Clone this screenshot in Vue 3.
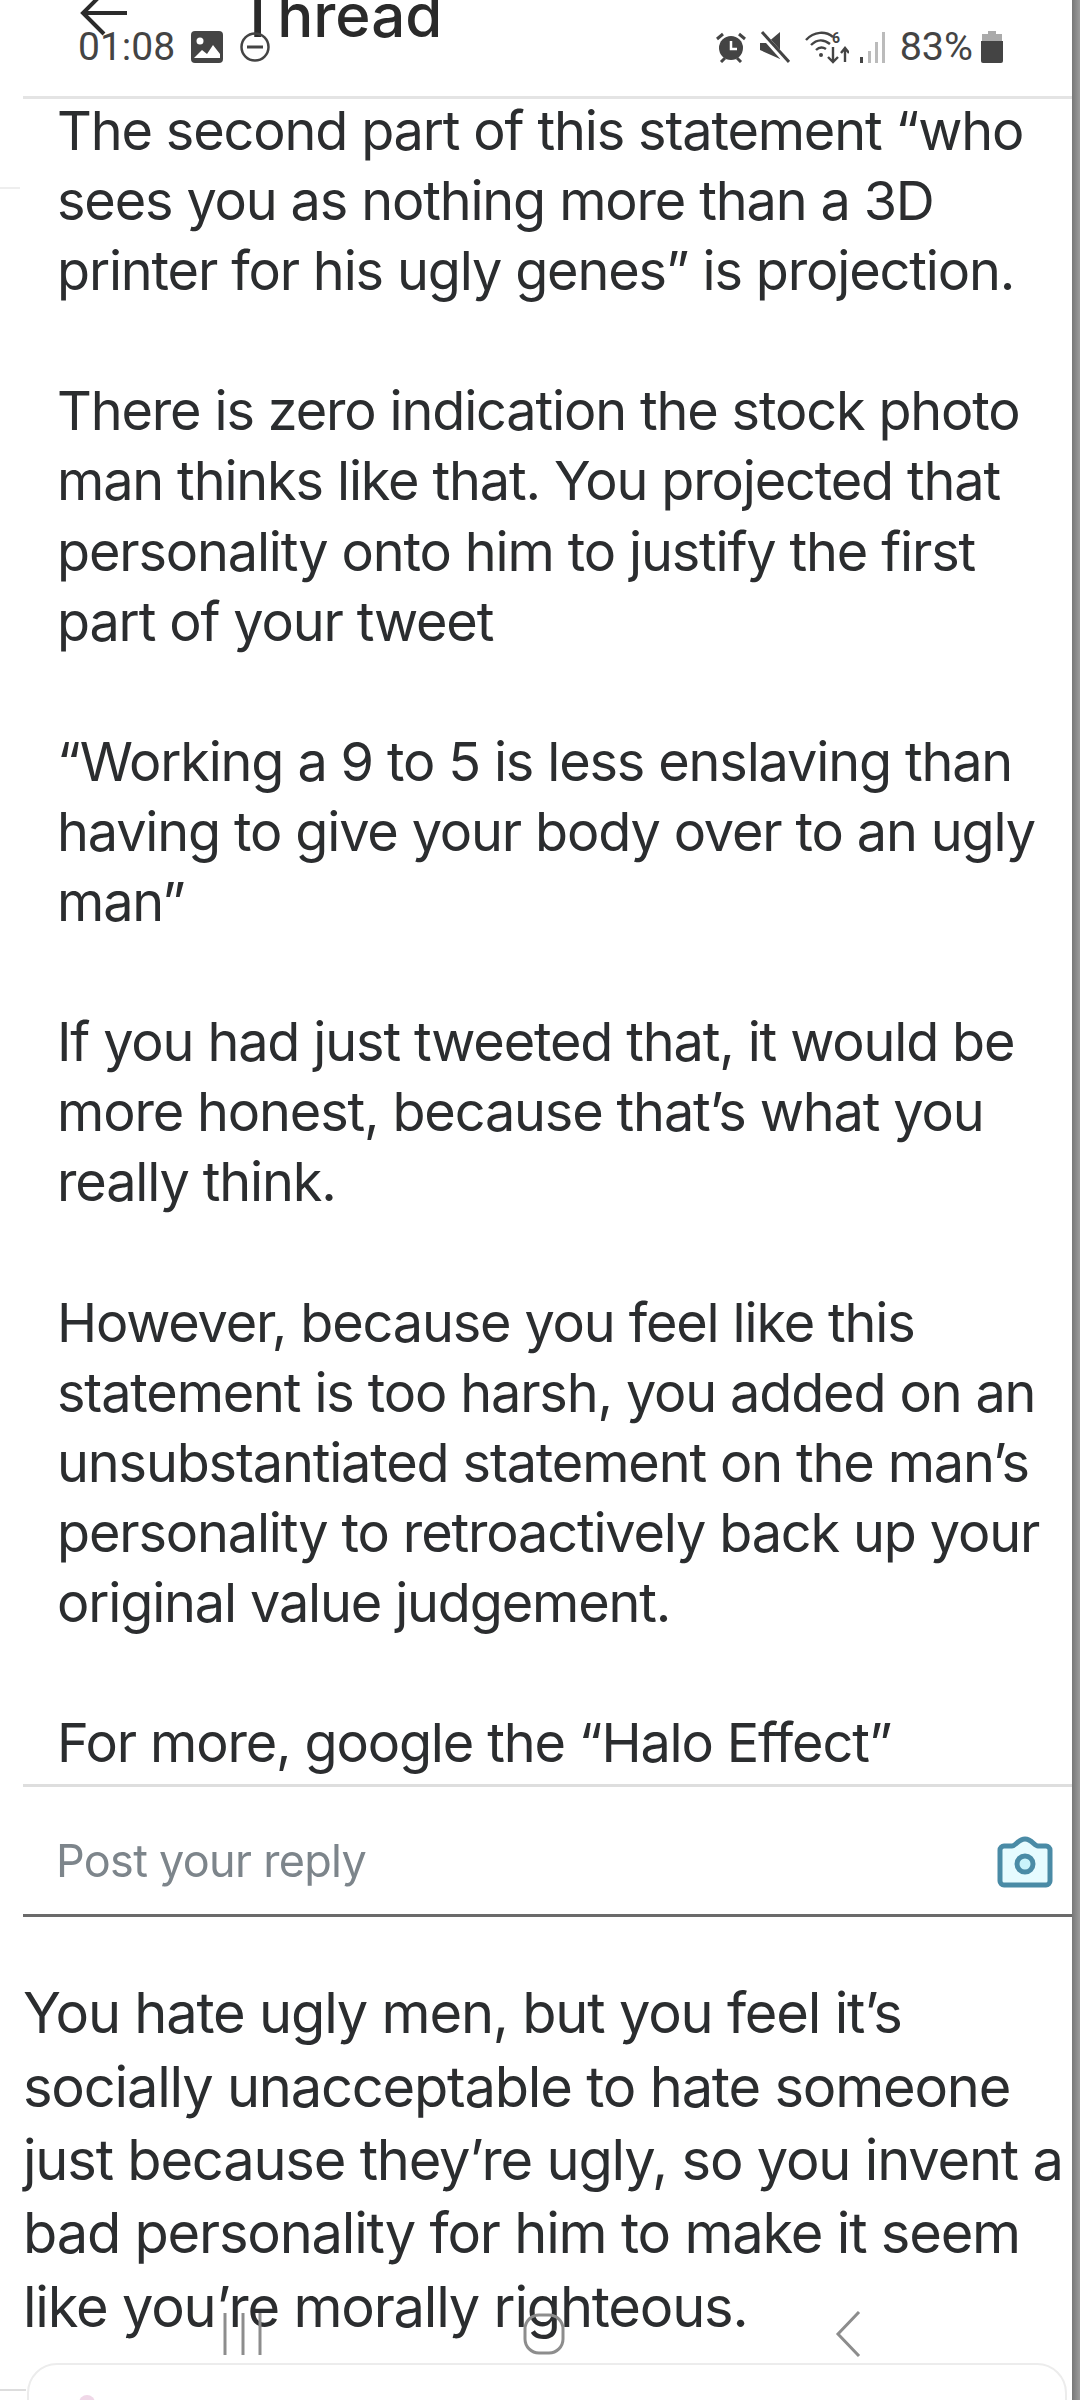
<script setup>
const thread = [
  ['The second part of this statement “who', 'sees you as nothing more than a 3D', 'printer for his ugly genes” is projection.'],
  ['There is zero indication the stock photo', 'man thinks like that. You projected that', 'personality onto him to justify the first', 'part of your tweet'],
  ['“Working a 9 to 5 is less enslaving than', 'having to give your body over to an ugly', 'man”'],
  ['If you had just tweeted that, it would be', 'more honest, because that’s what you', 'really think.'],
  ['However, because you feel like this', 'statement is too harsh, you added on an', 'unsubstantiated statement on the man’s', 'personality to retroactively back up your', 'original value judgement.'],
  ['For more, google the “Halo Effect”']
]
const caption = [
  'You hate ugly men, but you feel it’s',
  'socially unacceptable to hate someone',
  'just because they’re ugly, so you invent a',
  'bad personality for him to make it seem',
  'like you’re morally righteous.'
]
</script>

<template>
  <div class="screen">
    <header class="topbar">
      <svg class="back" viewBox="0 0 50 40" width="50" height="40"><path d="M47 13H3M24 -8 3 13l21 21" fill="none" stroke="#2b2b2b" stroke-width="4"/></svg>
      <span class="title">Thread</span>
    </header>
    <div class="status">
      <div class="status-left">
        <span class="clock">01:08</span>
        <svg width="32" height="32" viewBox="0 0 32 32"><rect width="32" height="32" rx="4" fill="#444"/><circle cx="9" cy="10" r="3.5" fill="#fff"/><path d="M3 27l8-8 5 4 6-9 7 9v4H3z" fill="#fff"/></svg>
        <svg width="32" height="32" viewBox="0 0 32 32"><circle cx="16" cy="16" r="13.5" fill="none" stroke="#444" stroke-width="2.5"/><path d="M8 16h16" stroke="#444" stroke-width="3"/></svg>
      </div>
      <div class="status-right">
        <svg class="alarm" width="30" height="32" viewBox="0 0 30 32"><circle cx="15" cy="17" r="12" fill="#444"/><path d="M15 10v8h6" fill="none" stroke="#fff" stroke-width="2.5"/><path d="M1 8l6-5M29 8l-6-5M5 31l4-4M25 31l-4-4" stroke="#444" stroke-width="3"/></svg>
        <svg class="mute" width="30" height="32" viewBox="0 0 30 32"><path d="M0 12h7l13-11v27L0 19z" fill="#444"/><path d="M1 2l26 29" stroke="#fff" stroke-width="6"/><path d="M2 1l27 30" stroke="#444" stroke-width="3"/></svg>
        <svg class="wifi" width="44" height="34" viewBox="0 0 44 34"><path d="M1 10C9 1 21 1 28 7M6 15c6-6 13-6 19-1M11 20c3-3 7-3 10-1" fill="none" stroke="#444" stroke-width="2.4"/><circle cx="16" cy="25" r="2" fill="#444"/><text x="27" y="13" font-size="14" font-weight="700" fill="#444" font-family="Roboto, sans-serif">6</text><path d="M28 17v15m-5-5 5 5 5-5M40 32V18m-4 5 4-5 4 5" fill="none" stroke="#444" stroke-width="2.4"/></svg>
        <svg class="signal" width="26" height="32" viewBox="0 0 26 32"><path d="M1 26h3v6H1z" fill="#444"/><path d="M9 20h3v12H9zM16 11h3v21h-3zM23 1h3v31h-3z" fill="#bbb"/></svg>
        <span class="pct">83%</span>
        <svg class="batt" width="22" height="32" viewBox="0 0 22 32"><path d="M7 0h8v4H7z" fill="#aaa"/><path d="M1 3h20v8H1z" fill="#aaa"/><path d="M0 10h22v20a2 2 0 0 1-2 2H2a2 2 0 0 1-2-2z" fill="#444"/></svg>
      </div>
    </div>

    <div class="rule top"></div>
    <div class="side-tick"></div>

    <article class="thread">
      <p v-for="(para, i) in thread" :key="i" class="para">
        <span v-for="line in para" :key="line" class="line">{{ line }}</span>
      </p>
    </article>

    <div class="rule soft"></div>
    <div class="reply">
      <span class="reply-text">Post your reply</span>
      <svg width="58" height="54" viewBox="0 0 58 54"><path d="M4 16a4 4 0 0 1 4-4h8c4 0 6-7 13-7s9 7 13 7h8a4 4 0 0 1 4 4v31a4 4 0 0 1-4 4H8a4 4 0 0 1-4-4z" fill="#e6fbff" stroke="#4a8ba6" stroke-width="5" stroke-linejoin="round"/><circle cx="29" cy="30" r="8" fill="#c9f4fb" stroke="#4a8ba6" stroke-width="5"/></svg>
    </div>
    <div class="rule dark"></div>

    <section class="caption">
      <span v-for="line in caption" :key="line" class="line">{{ line }}</span>
    </section>

    <div class="next-card"><span class="avatar-hint"></span></div>
    <div class="side-tick lower"></div>
    <div class="edge"></div>

    <nav class="navbar">
      <svg width="42" height="42" viewBox="0 0 42 42"><path d="M3 0v42M21 0v42M38 0v42" stroke="#8d8d8d" stroke-width="3"/></svg>
      <svg class="home" width="42" height="42" viewBox="0 0 42 42"><rect x="2" y="2" width="38" height="38" rx="14" fill="none" stroke="#8d8d8d" stroke-width="3"/></svg>
      <svg class="prev" width="26" height="46" viewBox="0 0 26 46"><path d="M24 1 3 23l21 22" fill="none" stroke="#8d8d8d" stroke-width="3"/></svg>
    </nav>
  </div>
</template>

<style scoped>
.screen {
  position: relative;
  width: 1080px;
  height: 2400px;
  overflow: hidden;
  background: #fff;
  font-family: Inter, Roboto, "Liberation Sans", sans-serif;
  color: #2b2d2f;
}
.topbar {
  height: 96px;
  box-sizing: border-box;
  display: flex;
  align-items: flex-start;
  padding-left: 80px;
}
.title {
  margin-left: 108px;
  margin-top: -15px;
  font-size: 60px;
  line-height: 60px;
  font-weight: 500;
  color: #2a2a2a;
  filter: blur(0.6px);
}
.status {
  position: absolute;
  top: 30px;
  left: 78px;
  width: 925px;
  height: 34px;
  display: flex;
  justify-content: space-between;
  align-items: center;
  color: #444;
  font-family: Roboto, sans-serif;
}
.status-left, .status-right { display: flex; align-items: center; }
.status-left { gap: 16px; }
.mute { margin-left: 14px; }
.wifi { margin-left: 15px; }
.signal { margin-left: 10px; }
.pct { margin-left: 15px; }
.batt { margin-left: 8px; }
.clock { font-size: 39px; line-height: 34px; }
.pct { font-size: 39.5px; line-height: 34px; }
.rule { height: 3px; margin-left: 23px; background: #e4e4e4; }
.rule.soft { margin-top: 6px; background: #dedede; }
.rule.dark { background: #6a6a6a; }
.side-tick {
  position: absolute;
  left: 0;
  top: 187px;
  width: 20px;
  height: 2px;
  background: #eee;
}
.side-tick.lower { top: 2389px; width: 26px; background: #ddd; }
.thread { margin-top: -3px; padding: 0 0 0 57px; filter: blur(0.6px); }
.para { margin: 0 0 70.1px; }
.para:last-child { margin-bottom: 0; }
.line {
  display: block;
  white-space: nowrap;
  font-size: 54px;
  letter-spacing: -1.15px;
  line-height: 70.1px;
}
.reply {
  height: 127px;
  box-sizing: border-box;
  padding: 20px 26px 0 56px;
  display: flex;
  align-items: center;
  justify-content: space-between;
}
.reply-text { font-size: 45px; letter-spacing: -0.7px; color: #7d858b; filter: blur(0.7px); }
.caption { padding: 60px 0 0 23px; filter: blur(0.6px); }
.caption .line { font-size: 56px; letter-spacing: -1.2px; line-height: 73.4px; }
.next-card {
  position: absolute;
  left: 27px;
  top: 2363px;
  width: 1040px;
  height: 60px;
  box-sizing: border-box;
  border: 2px solid #ececec;
  border-radius: 30px 30px 0 0;
}
.avatar-hint {
  position: absolute;
  left: 50px;
  top: 30px;
  width: 16px;
  height: 8px;
  border-radius: 8px 8px 0 0;
  background: #f0d8e8;
}
.edge {
  position: absolute;
  right: 0;
  top: 0;
  bottom: 0;
  width: 8px;
  background: linear-gradient(90deg, #777, #9c9c9c);
}
.navbar {
  position: absolute;
  left: 222px;
  top: 2311px;
  display: flex;
  align-items: center;
}
.home { margin-left: 259px; }
.prev { margin-left: 270px; }
</style>
